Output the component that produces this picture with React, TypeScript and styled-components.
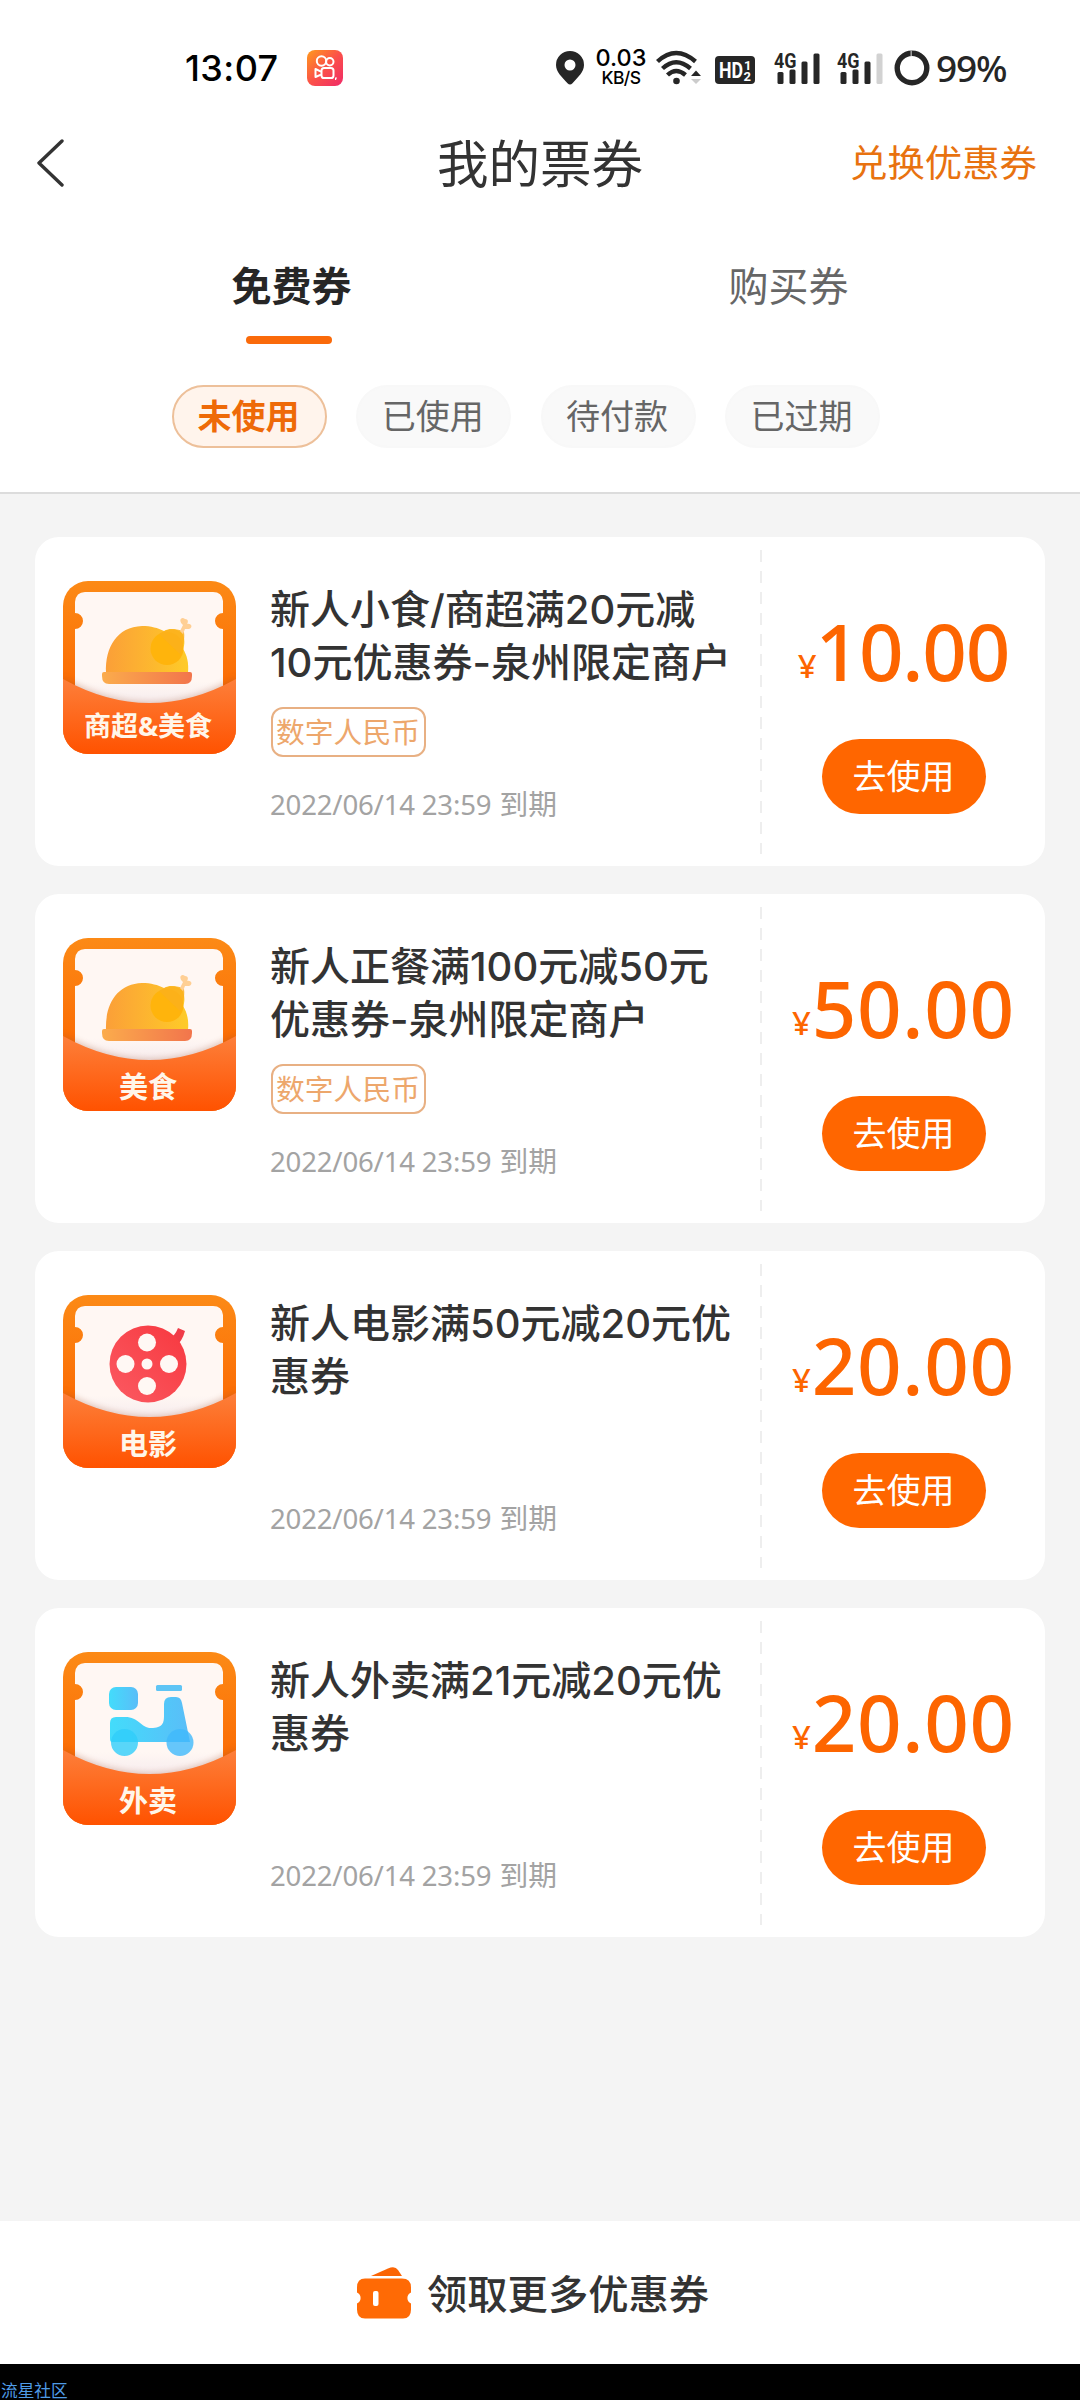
import React from "react";
import styled, { createGlobalStyle } from "styled-components";

const Global = createGlobalStyle`
  * { box-sizing: border-box; }
  body { margin: 0; background: #f4f4f4; }
  svg { display: block; flex: none; }
`;

const Page = styled.div`
  width: 1080px;
  height: 2400px;
  display: flex;
  flex-direction: column;
  background: #f4f4f4;
  color: #333;
  font-family: Inter, "Noto Sans CJK SC", sans-serif;
  white-space: nowrap;
  overflow: hidden;
`;

const Top = styled.header`
  height: 494px;
  flex: none;
  background: #fff;
  border-bottom: 2px solid #dcdcdc;
`;

const StatusBar = styled.div`
  height: 110px;
  padding: 26px 0 0 185px;
  display: flex;
  align-items: center;
  color: #000;
`;

const Clock = styled.span`
  width: 122px;
  font-size: 36px;
  line-height: 40px;
  letter-spacing: 0.4px;
  font-weight: 500;
`;

const Status = styled.div`
  margin-left: 213px;
  display: flex;
  align-items: center;
`;

const Speed = styled.div`
  width: 54px;
  margin: 0 8px 0 10px;
  display: flex;
  flex-direction: column;
  align-items: center;
  font-weight: 500;
  font-size: 23.5px;
  line-height: 20px;
`;

const SpeedUnit = styled.span`
  font-size: 17.5px;
  line-height: 20px;
  font-weight: 500;
  letter-spacing: -0.6px;
`;

const Battery = styled.span`
  margin-left: 6px;
  font-family: "Noto Sans", sans-serif;
  font-size: 37px;
  line-height: 40px;
  font-weight: 500;
  color: #262626;
  letter-spacing: -1.2px;
`;

const NavBar = styled.div`
  height: 106px;
  padding: 0 43px 0 36px;
  display: grid;
  grid-template-columns: 1fr auto 1fr;
  align-items: center;
`;

const Title = styled.h1`
  margin: 0;
  padding: 2px 0 0 7px;
  font-size: 51.5px;
  line-height: 60px;
  font-weight: 400;
`;

const NavLink = styled.a`
  justify-self: end;
  padding-top: 2px;
  font-size: 37.4px;
  line-height: 50px;
  color: #e8720f;
`;

const Tabs = styled.nav`
  height: 129px;
  padding: 42px 43px 0;
  display: grid;
  grid-template-columns: 1fr 1fr;
`;

const Tab = styled.div<{ $active?: boolean }>`
  display: flex;
  flex-direction: column;
  align-items: center;
  gap: 20px;
  font-size: 40px;
  line-height: 58px;
  font-weight: ${(p) => (p.$active ? 600 : 400)};
  color: ${(p) => (p.$active ? "#262626" : "#666")};
`;

const Underline = styled.span`
  width: 86px;
  height: 8px;
  border-radius: 4px;
  margin-right: 5px;
  background: #fa6a0a;
`;

const Filters = styled.div`
  display: flex;
  gap: 29.3px;
  padding: 40px 0 0 172px;
`;

const Pill = styled.button<{ $active?: boolean }>`
  width: 155px;
  height: 63px;
  padding: 0 2px 0 0;
  border-radius: 32px;
  border: 2px solid ${(p) => (p.$active ? "#edc09a" : "#f8f8f8")};
  background: ${(p) => (p.$active ? "#fff4ec" : "#f9f9f9")};
  color: ${(p) => (p.$active ? "#ee6a08" : "#666")};
  font: ${(p) => (p.$active ? 600 : 400)} 34px/58px Inter, "Noto Sans CJK SC", sans-serif;
`;

const List = styled.main`
  flex: 1;
  padding: 43px 35px 0;
  display: flex;
  flex-direction: column;
  gap: 28px;
`;

const Card = styled.article`
  height: 329px;
  border-radius: 24px;
  background: #fff;
  display: flex;
`;

const Badge = styled.div`
  width: 235px;
  padding: 44px 0 0 28px;
`;

const Info = styled.div`
  width: 490px;
  padding: 46px 0 0;
  display: flex;
  flex-direction: column;
  align-items: flex-start;
`;

const Name = styled.h2`
  margin: 0;
  height: 107px;
  font-size: 40px;
  line-height: 53px;
  font-weight: 500;
`;

const Tag = styled.span`
  margin: 17px 0 0 1px;
  width: 155px;
  height: 50px;
  border: 2px solid #e8b083;
  border-radius: 12px;
  text-align: center;
  font-size: 28.8px;
  line-height: 48px;
  text-indent: -1px;
  color: #eda76c;
`;

const Expiry = styled.time`
  margin: auto 0 41px;
  font-size: 28.8px;
  line-height: 40px;
  color: #a3a3a3;
`;

const Stamp = styled.span`
  font-family: "Noto Sans", sans-serif;
  font-size: 27.6px;
  font-weight: 400;
  letter-spacing: -0.2px;
`;

const Divider = styled.div`
  width: 2px;
  height: 304px;
  margin-top: 13px;
  background: repeating-linear-gradient(#eee 0 12px, transparent 12px 20.9px);
`;

const Action = styled.div`
  flex: 1;
  display: flex;
  flex-direction: column;
  align-items: center;
  padding-top: 64px;
`;

const Price = styled.div<{ $tight: boolean }>`
  height: 100px;
  color: #fd6500;
  font-family: "Noto Sans", sans-serif;
  font-size: 78px;
  line-height: 100px;
  font-weight: 500;
  letter-spacing: ${(p) => (p.$tight ? "-1.2px" : "0.7px")};
`;

const Yen = styled.span`
  position: relative;
  top: -3px;
  font-size: 33px;
`;

const UseButton = styled.button`
  width: 164px;
  height: 75px;
  margin-top: 38px;
  padding: 0;
  border: 0;
  border-radius: 38px;
  background: #ff6600;
  color: #fff;
  font: 400 34px/72px Inter, "Noto Sans CJK SC", sans-serif;
`;

const Footer = styled.footer`
  height: 143px;
  background: #fff;
  display: flex;
  align-items: center;
  padding: 5px 0 0 355px;
  gap: 14px;
  font-size: 40.3px;
  line-height: 60px;
  font-weight: 500;
`;

const Strip = styled.div`
  height: 36px;
  padding: 19px 0 0 1px;
  background: #000;
  color: #4f9be6;
  font-size: 16.7px;
  line-height: 17px;
`;

const Kuaishou = () => (
  <svg width="36" height="36" viewBox="0 0 36 36">
    <defs>
      <linearGradient id="ks" x1="0" y1="0" x2="1" y2="1">
        <stop offset="0" stopColor="#ff9a1c" />
        <stop offset=".5" stopColor="#fb5149" />
        <stop offset="1" stopColor="#f02a68" />
      </linearGradient>
    </defs>
    <rect width="36" height="36" rx="8" fill="url(#ks)" />
    <g fill="none" stroke="#fff" strokeWidth="2">
      <circle cx="14.5" cy="11" r="4.7" />
      <circle cx="22.8" cy="11.8" r="3.7" />
      <rect x="14.5" y="18" width="12" height="10" rx="2.6" />
      <path d="M14 21.6L8.5 19v8L14 24.600" strokeLinejoin="round" />
    </g>
    <path d="M28 27.500h2l-1 2.500h-1z" fill="#fff" />
  </svg>
);

const Pin = () => (
  <svg width="28" height="34" viewBox="0 0 28 34">
    <path fillRule="evenodd" fill="#262626" d="M14 0a14 14 0 0 1 14 14c0 7-6 12-11.500 18.200q-2.500 2.800-5 0C6 26 0 21 0 14A14 14 0 0 1 14 0zm0 8.500a5.500 5.500 0 1 0 0 11 5.500 5.500 0 0 0 0-11z" />
  </svg>
);

const Wifi = () => (
  <svg width="46" height="36" viewBox="0 0 46 36">
    <g fill="none" stroke="#262626" strokeWidth="4.400">
      <path d="M1.500 11.500Q20 -5.500 39.500 11.500" />
      <path d="M6.500 18.500Q20 6 34.500 18.500" />
      <path d="M11.500 25Q20 17 29.500 25" />
    </g>
    <circle cx="20.500" cy="31" r="3.300" fill="#262626" />
    <path d="M35 26l5-5.500 5 5.500z" fill="#262626" />
    <path d="M35 29h10l-5 5z" fill="#ccc" />
  </svg>
);

const HdFrame = styled.svg`
  margin: 4px 0 0 13px;
  font-family: Roboto, sans-serif;
  font-weight: 700;
  fill: #fff;
`;

const Hd = () => (
  <HdFrame width="40" height="28" viewBox="0 0 40 28">
    <rect width="40" height="28" rx="4" fill="#262626" />
    <text x="4" y="21.500" fontSize="21.500" textLength="24" lengthAdjust="spacingAndGlyphs">HD</text>
    <text x="29" y="13.500" fontSize="13">1</text>
    <text x="28.500" y="24.500" fontSize="13">2</text>
  </HdFrame>
);

const Signal = ({ level, gap }: { level: number; gap: number }) => (
  <svg width="47" height="36" viewBox="0 0 47 36" style={{ marginLeft: gap }}>
    {[12, 14.500, 22.500, 30.500].map((h, i) => (
      <rect key={h} x={3.500 + i * 12} y={34 - h} width="6" height={h} rx="1.500" fill={i < level ? "#262626" : "#d2d2d2"} />
    ))}
    <text x="0" y="17.500" fontFamily="Roboto, sans-serif" fontWeight="700" fontSize="20.500" fill="#262626" stroke="#fff" strokeWidth="2" paintOrder="stroke" textLength="22.500" lengthAdjust="spacingAndGlyphs">4G</text>
  </svg>
);

const Ring = () => (
  <svg width="36" height="36" viewBox="0 0 36 36" style={{ marginLeft: 10 }}>
    <circle cx="18" cy="18" r="14.800" fill="none" stroke="#262626" strokeWidth="5.400" />
    <path d="M17.200 0v6" stroke="#aaa" strokeWidth="1.400" />
  </svg>
);

const Back = () => (
  <svg width="28" height="48" viewBox="0 0 28 48">
    <path d="M26 2L3 24l23 22" fill="none" stroke="#333" strokeWidth="3.400" strokeLinecap="round" strokeLinejoin="round" />
  </svg>
);

type Kind = "food" | "film" | "scooter";

const Chicken = () => (
  <g>
    <path d="M43 92C42 66 54 46 79 45c9 0 16 2 22 5 8-4 14-1 18 2 3 5 3 12 1 16 4 6 6 14 5 24z" fill="url(#bird)" />
    <circle cx="104" cy="67.500" r="16.500" fill="#ffb40c" />
    <path d="M96 53c7-6 20-6 25-2 1 8-1 14-4 22z" fill="#fbb01c" opacity=".85" />
    <path d="M117 50l3-6c-5-4-2-9 2-6 4 0 3 4 2 5 5-1 6 4 2 5l-4 0-2 5z" fill="#ffcf94" />
    <path d="M41 91h86q2 0 2 2v2q0 8-7 8H46q-7 0-7-8v-2q0-2 2-2z" fill="url(#plate)" />
  </g>
);

const Film = () => (
  <g>
    <path d="M105 45q7-4 10-12l7 3c-2 7-5 12-9 15z" fill="#f03c48" />
    <circle cx="85" cy="69" r="38.500" fill="url(#reel)" />
    <g fill="#fff8f4">
      <circle cx="84" cy="47.500" r="9" />
      <circle cx="62.500" cy="69" r="9" />
      <circle cx="106" cy="69" r="9" />
      <circle cx="84" cy="91" r="9" />
      <circle cx="84" cy="69" r="5.500" />
    </g>
  </g>
);

const Scooter = () => (
  <g>
    <rect x="46" y="35" width="29" height="23" rx="7" fill="url(#sky)" />
    <rect x="93" y="33" width="26" height="6" rx="1.500" fill="#5fc5f5" />
    <path d="M47 71q0-6 6-6h9c14 0 16 11 26 11 12 0 13-5 13-13V52q0-7 7-7h5q5 0 6 6l8 39H49q-2 0-2-3z" fill="url(#sky)" />
    <circle cx="61.500" cy="90.500" r="13.500" fill="#2fcdfa" opacity=".8" />
    <circle cx="117" cy="90.500" r="13.500" fill="#40b9fb" opacity=".8" />
  </g>
);

const TicketIcon = ({ kind, label }: { kind: Kind; label: string }) => (
  <svg width="173" height="173" viewBox="0 0 173 173">
    <defs>
      <linearGradient id="back" x1="0" y1="0" x2="0" y2="1">
        <stop offset="0" stopColor="#fc8a16" />
        <stop offset=".6" stopColor="#fb6c04" />
      </linearGradient>
      <linearGradient id="pocket" x1="0" y1="0" x2="0" y2="1">
        <stop offset="0" stopColor="#fd7f3a" />
        <stop offset="1" stopColor="#ff5200" />
      </linearGradient>
      <linearGradient id="shade" x1="0" y1="0" x2="0" y2="1">
        <stop offset=".75" stopColor="#fff7f3" />
        <stop offset="1" stopColor="#f3e8ec" />
      </linearGradient>
      <linearGradient id="bird">
        <stop offset="0" stopColor="#fb9f38" />
        <stop offset="1" stopColor="#fecb28" />
      </linearGradient>
      <linearGradient id="plate">
        <stop offset="0" stopColor="#fbac4c" />
        <stop offset="1" stopColor="#f2754c" />
      </linearGradient>
      <linearGradient id="reel" x1="0" y1="1" x2="1" y2="0">
        <stop offset="0" stopColor="#fb5a62" />
        <stop offset="1" stopColor="#f7383f" />
      </linearGradient>
      <linearGradient id="sky">
        <stop offset="0" stopColor="#43dcfb" />
        <stop offset="1" stopColor="#5abdf8" />
      </linearGradient>
      <clipPath id="frame">
        <rect width="173" height="173" rx="25" />
      </clipPath>
      <filter id="soft" x="-10%" y="-20%" width="120%" height="140%">
        <feGaussianBlur stdDeviation="3" />
      </filter>
    </defs>
    <g clipPath="url(#frame)">
      <rect width="173" height="173" fill="url(#back)" />
      <path d="M22 11H150Q159 11 160 20V32a8 8 0 0 0 0 16V130H12V48a8 8 0 0 0 0-16V21Q13 11 22 11z" fill="url(#shade)" />
      {kind === "food" && <Chicken />}
      {kind === "film" && <Film />}
      {kind === "scooter" && <Scooter />}
      <path d="M0 96Q86.500 146 173 96V173H0z" fill="#a0522d" opacity=".3" filter="url(#soft)" />
      <path d="M0 98Q86.500 146 173 98V173H0z" fill="url(#pocket)" />
    </g>
    <text x="85" y={label.length > 2 ? 155 : 159.500} textAnchor="middle" fontFamily="Noto Sans, Noto Sans CJK SC, sans-serif" fontWeight="700" fontSize={label.length > 2 ? 27 : 29} textLength={label.length > 2 ? 128 : 58} fill="#fff6ea">
      {label}
    </text>
  </svg>
);

const Wallet = () => (
  <svg width="58" height="58" viewBox="0 0 58 58">
    <path d="M16 10L33 2.500q7-3 10 1.500l4 6z" fill="#fb6505" />
    <path d="M10 12.500H47q9 0 9 9v5a6 6 0 0 0 0 11v6q0 9-8 9H10q-8 0-8-9v-6a6 6 0 0 0 0-11v-5q0-9 8-9z" fill="#ff6a05" />
    <rect x="18" y="25" width="5.500" height="15" rx="2" fill="#fff" />
  </svg>
);

const coupons: { kind: Kind; label: string; name: string[]; tag?: string; price: string }[] = [
  { kind: "food", label: "商超&美食", name: ["新人小食/商超满20元减", "10元优惠券-泉州限定商户"], tag: "数字人民币", price: "10.00" },
  { kind: "food", label: "美食", name: ["新人正餐满100元减50元", "优惠券-泉州限定商户"], tag: "数字人民币", price: "50.00" },
  { kind: "film", label: "电影", name: ["新人电影满50元减20元优", "惠券"], price: "20.00" },
  { kind: "scooter", label: "外卖", name: ["新人外卖满21元减20元优", "惠券"], price: "20.00" },
];

export default function App() {
  return (
    <Page>
      <Global />
      <Top>
        <StatusBar>
          <Clock>13:07</Clock>
          <Kuaishou />
          <Status>
            <Pin />
            <Speed>
              0.03
              <SpeedUnit>KB/S</SpeedUnit>
            </Speed>
            <Wifi />
            <Hd />
            <Signal level={4} gap={19} />
            <Signal level={3} gap={16} />
            <Ring />
            <Battery>99%</Battery>
          </Status>
        </StatusBar>
        <NavBar>
          <Back />
          <Title>我的票券</Title>
          <NavLink>兑换优惠券</NavLink>
        </NavBar>
        <Tabs>
          <Tab $active>
            免费券
            <Underline />
          </Tab>
          <Tab>购买券</Tab>
        </Tabs>
        <Filters>
          <Pill $active>未使用</Pill>
          <Pill>已使用</Pill>
          <Pill>待付款</Pill>
          <Pill>已过期</Pill>
        </Filters>
      </Top>
      <List>
        {coupons.map((c) => (
          <Card key={c.label}>
            <Badge>
              <TicketIcon kind={c.kind} label={c.label} />
            </Badge>
            <Info>
              <Name>
                {c.name[0]}
                <br />
                {c.name[1]}
              </Name>
              {c.tag && <Tag>{c.tag}</Tag>}
              <Expiry>
                <Stamp>2022/06/14 23:59</Stamp> 到期
              </Expiry>
            </Info>
            <Divider />
            <Action>
              <Price $tight={c.price.startsWith("1")}>
                <Yen>¥</Yen>
                {c.price}
              </Price>
              <UseButton>去使用</UseButton>
            </Action>
          </Card>
        ))}
      </List>
      <Footer>
        <Wallet />
        领取更多优惠券
      </Footer>
      <Strip>流星社区</Strip>
    </Page>
  );
}
